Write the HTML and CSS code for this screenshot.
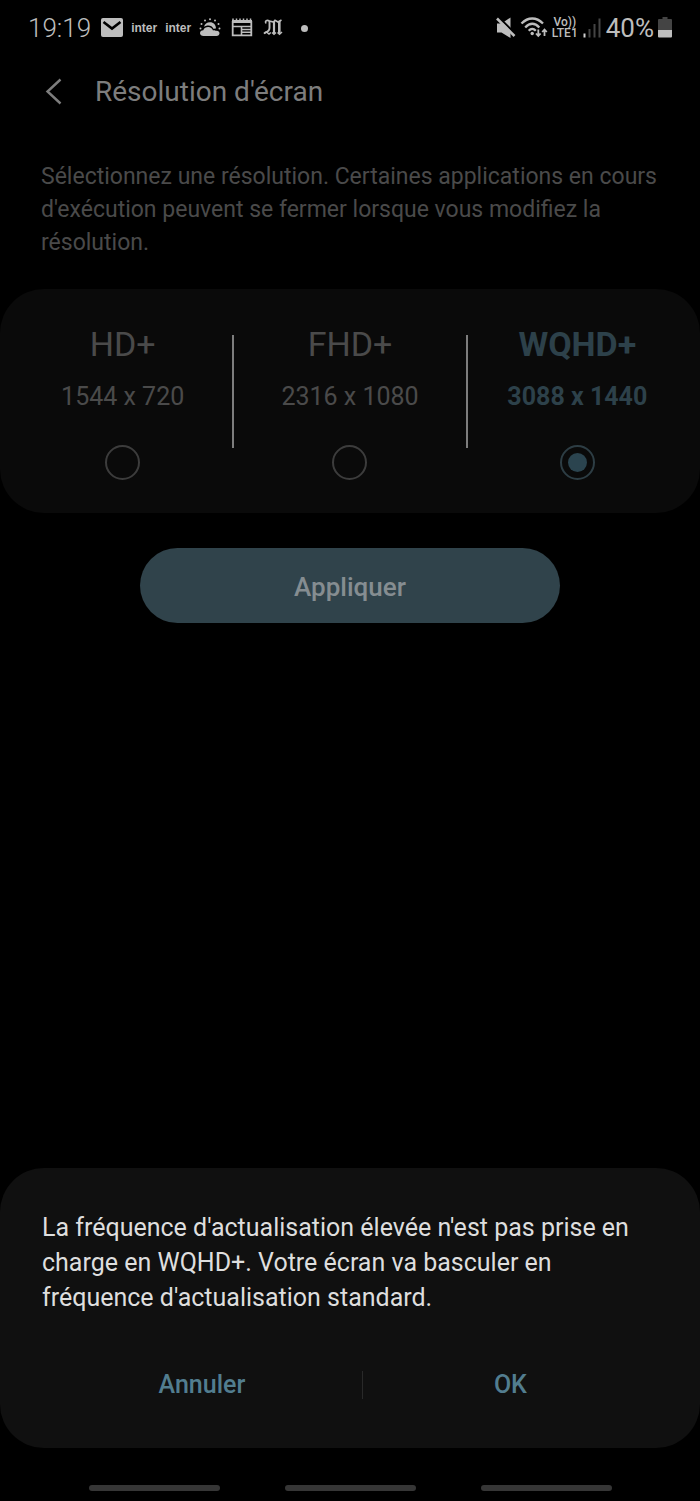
FILE: index.html
```html
<!DOCTYPE html>
<html lang="fr">
<head>
<meta charset="utf-8">
<meta name="viewport" content="width=device-width, initial-scale=1">
<title>Résolution d'écran</title>
<link rel="stylesheet" href="styles.css">
</head>
<body class="screen">
<div class="status">
  <div class="status-group">
    <span class="clock">19:19</span>
    <svg class="icon-mail" width="22" height="20" viewBox="0 0 22 20" aria-hidden="true"><rect x="0" y="0" width="22" height="19" rx="2" fill="#bdbdbd"/><path d="M2.500 4L11 10.500L19.500 4" fill="none" stroke="#000" stroke-width="2.600"/></svg>
    <span class="inter">inter</span>
    <span class="inter">inter</span>
    <svg class="icon-weather" width="22" height="20" viewBox="0 0 22 20" aria-hidden="true"><g fill="#bdbdbd"><circle cx="11" cy="1.300" r="1"/><circle cx="6" cy="2.600" r="1"/><circle cx="16" cy="2.600" r="1"/><circle cx="2.500" cy="6" r="1"/><circle cx="19.500" cy="6" r="1"/><circle cx="1.500" cy="10.500" r="1"/><circle cx="20.500" cy="10.500" r="1"/><path d="M5 9C5.500 6 8 4.200 11 4.200c3.600 0 6 2.500 6 6.300-1.500 0-2 .2-2.300.6C13.500 8.600 11.500 7.600 9.500 7.600 7.500 7.600 6 8.200 5 9z"/><path d="M4.500 18C2.500 18 1 16.800 1 15.200s1.400-2.900 3.300-2.900C5 10.300 7 9.100 9.200 9.100c2.300 0 4.100 1.400 4.800 3.500 1-.7 2.300-.5 3 .3 2-.3 3.500.8 3.500 2.400 0 1.600-1.300 2.700-3 2.700z"/></g></svg>
    <svg class="icon-news" width="22" height="20" viewBox="0 0 22 20" aria-hidden="true"><path d="M1.700 3v14.300h18.600V3" fill="none" stroke="#bdbdbd" stroke-width="1.800"/><path d="M1 2h20v3H1z" fill="#bdbdbd"/><path d="M2 2.500V.5M5.500 2.500V.5M9 2.500V.5M12.500 2.500V.5M16 2.500V.5M19.500 2.500V.5" stroke="#bdbdbd" stroke-width="1.500"/><path d="M2 8.500h18M10.500 8.500v8.500M10.500 11.500H20M10.500 14.300H20" fill="none" stroke="#bdbdbd" stroke-width="1.600"/></svg>
    <svg class="icon-m" width="20" height="20" viewBox="0 0 20 20" aria-hidden="true"><g fill="none" stroke="#bdbdbd"><path d="M3 5.500C1.500 2.500 4 1.800 6.500 3L10.500 4L12 2.200L15 4L18.500 2" stroke-width="1.600"/><path d="M6.500 3V10c0 3-2 4-5 4.800" stroke-width="1.900"/><path d="M11 3v12" stroke-width="2.200"/><path d="M16.300 3v12" stroke-width="2.600"/><path d="M.8 15.500L3.500 14L6 16L7.800 14.500M9 14.500L11 16.300L13 14.500M14.500 14.500L16.500 16.300L19 14" stroke-width="1.500"/></g></svg>
    <span class="dot"></span>
  </div>
  <div class="status-group status-system">
    <svg class="icon-mute" width="20" height="22" viewBox="0 0 20 22" aria-hidden="true"><path d="M1 6.500h4.500L14.500 .5v20.500L5.500 15.500H1z" fill="#bdbdbd"/><path d="M3.500 1L20.500 18" stroke="#000" stroke-width="2"/><path d="M1 1.500L18.500 19" stroke="#bdbdbd" stroke-width="2.600"/></svg>
    <svg class="icon-wifi" width="28" height="22" viewBox="0 0 28 22" aria-hidden="true"><g fill="none" stroke="#bdbdbd" stroke-width="2.300"><path d="M1.500 6.500C8-.2 16.500-.2 23 6.500M5.200 10.500C9.800 5.500 14.800 5.500 19.300 10.500M8.700 13.800C11 11.300 13.500 11.300 15.800 13.800"/><path d="M18.300 12.500v6.500M16 16.500L18.300 19 20.600 16.500M24.500 19v-6.500M22.200 15L24.500 12.500 26.800 15" stroke-width="1.800"/></g><circle cx="12.200" cy="16.500" r="1.700" fill="#bdbdbd"/></svg>
    <span class="volte"><span>Vo))</span><span>LTE1</span></span>
    <svg class="icon-signal" width="20" height="22" viewBox="0 0 20 22" aria-hidden="true"><path d="M2.500 16.500v4" stroke="#d0d0d0" stroke-width="2"/><path d="M7.500 12V20.500M12.500 7V20.500M17.500 1.500v19" stroke="#444" stroke-width="2"/></svg>
    <span class="percent">40%</span>
    <svg class="icon-battery" width="14" height="22" viewBox="0 0 14 22" aria-hidden="true"><path d="M4.500 0h5v2H13q1 0 1 1v10H0V3q0-1 1-1h3.500z" fill="#444"/><path d="M0 13h14v6.500q0 1-1 1H1q-1 0-1-1z" fill="#bdbdbd"/></svg>
  </div>
</div>
<header class="header">
  <button class="back" type="button" aria-label="Retour"><svg width="18" height="28" viewBox="0 0 18 28"><path d="M15.500 1.500L2.500 13.500L15.500 25.500" fill="none" stroke="#7d7d7d" stroke-width="2.400"/></svg></button>
  <h1 class="title">Résolution d'écran</h1>
</header>
<main>
  <p class="description">Sélectionnez une résolution. Certaines applications en cours d'exécution peuvent se fermer lorsque vous modifiez la résolution.</p>
  <form class="form">
    <div class="options">
      <label class="option"><span class="name">HD+</span><span class="size">1544 x 720</span><input class="radio" type="radio" name="resolution" value="hd"></label>
      <label class="option"><span class="name">FHD+</span><span class="size">2316 x 1080</span><input class="radio" type="radio" name="resolution" value="fhd"></label>
      <label class="option selected"><span class="name">WQHD+</span><span class="size">3088 x 1440</span><input class="radio" type="radio" name="resolution" value="wqhd" checked></label>
    </div>
    <button class="apply" type="button">Appliquer</button>
  </form>
</main>
<section class="dialog" role="dialog" aria-labelledby="message">
  <p class="message" id="message">La fréquence d'actualisation élevée n'est pas prise en charge en WQHD+. Votre écran va basculer en fréquence d'actualisation standard.</p>
  <div class="actions">
    <button class="action" type="button">Annuler</button>
    <span class="separator"></span>
    <button class="action" type="button">OK</button>
  </div>
</section>
<nav class="gestures">
  <button class="gesture" type="button" aria-label="Applications récentes"></button>
  <button class="gesture" type="button" aria-label="Accueil"></button>
  <button class="gesture" type="button" aria-label="Précédent"></button>
</nav>
</body>
</html>
```
FILE: styles.css
```css
* { box-sizing: border-box; }
.screen {
  margin: 0;
  min-height: 100vh;
  display: flex;
  flex-direction: column;
  background: #000;
  color: #4a4a4a;
  font-family: Roboto, "Liberation Sans", sans-serif;
}
button {
  margin: 0;
  padding: 0;
  border: 0;
  background: none;
  font-family: inherit;
  cursor: pointer;
}
svg { display: block; flex: none; }

.status {
  display: flex;
  justify-content: space-between;
  height: 56px;
  padding: 0 28px;
  color: #bdbdbd;
}
.status-group { display: flex; align-items: center; gap: 8px; }
.clock, .percent { font-size: 26px; line-height: 32px; }
.clock { font-weight: 300; padding-right: 2px; }
.inter { font: bold 12px/16px "Liberation Sans", sans-serif; }
.icon-news, .icon-m { margin-left: 2px; }
.dot { width: 7px; height: 7px; margin-left: 10px; border-radius: 50%; background: #bdbdbd; }
.volte {
  display: flex;
  flex-direction: column;
  align-items: center;
  font-size: 12px;
  line-height: 11px;
  font-weight: 500;
}
.status-system { gap: 4px; }

.header { display: flex; align-items: center; gap: 32px; height: 72px; padding: 0 45px; }
.title { margin: 0; font-size: 28px; line-height: 40px; font-weight: 400; color: #7d7d7d; }

.description { margin: 32px 41px 30px; font-size: 23px; line-height: 33px; }
.form { display: flex; flex-direction: column; align-items: center; gap: 35px; }
.options {
  display: grid;
  grid-template-columns: repeat(3, 1fr);
  align-self: stretch;
  padding: 33px 0;
  border-radius: 44px;
  background: #0a0a0a;
}
.option { position: relative; display: flex; flex-direction: column; align-items: center; }
.option:first-child { padding-left: 12px; }
.option:last-child { padding-right: 12px; }
.option + .option::before {
  content: "";
  position: absolute;
  left: -1px;
  top: 13px;
  width: 2px;
  height: 113px;
  background: #7d7d7d;
}
.name { font-size: 34px; line-height: 44px; }
.size { margin: 14px 0 31px; font-size: 25px; line-height: 34px; }
.selected { color: #2d414a; font-weight: 700; }
.radio {
  appearance: none;
  display: grid;
  place-items: center;
  width: 35px;
  height: 35px;
  margin: 0;
  border: 2px solid #3c3c3c;
  border-radius: 50%;
}
.radio:checked { border-color: #2d3d44; }
.radio:checked::before {
  content: "";
  width: 19px;
  height: 19px;
  border-radius: 50%;
  background: #2b444f;
}
.apply {
  width: 60%;
  height: 75px;
  padding-top: 2px;
  border-radius: 38px;
  background: #30434b;
  color: #858d91;
  font-size: 26px;
  line-height: 36px;
  font-weight: 500;
}

.dialog { margin-top: auto; padding: 42px 42px 35px; border-radius: 44px; background: #101010; }
.message { margin: 0; color: #dedede; font-size: 25px; line-height: 35px; }
.actions {
  display: grid;
  grid-template-columns: 13fr 1px 12fr;
  align-items: center;
  margin-top: 42px;
}
.action { height: 56px; color: #527d8f; font-size: 25px; line-height: 34px; font-weight: 500; }
.separator { height: 28px; background: #292929; }

.gestures { display: flex; justify-content: center; gap: 65px; padding: 37px 0 10px; }
.gesture { width: 131px; height: 6px; border-radius: 3px; background: #363636; }
```
